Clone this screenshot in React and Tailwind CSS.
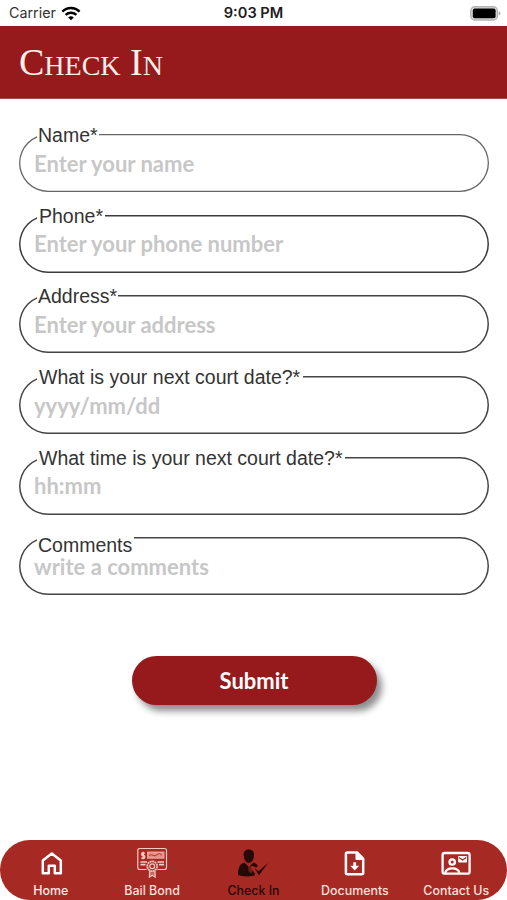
import React from "react";

const fields = [
  { label: "Name*", hint: "Enter your name", line: "shadow-[inset_0_0_0_1.3px_#666]", pad: "pl-px pr-[1px]", drop: "-top-[9px]" },
  { label: "Phone*", hint: "Enter your phone number", line: "shadow-[inset_0_0_0_1.5px_#3c3c3c]", pad: "pl-[2px] pr-[2px]", drop: "-top-[9px]" },
  { label: "Address*", hint: "Enter your address", line: "shadow-[inset_0_0_0_1.5px_#444]", pad: "pl-px pr-[1px]", drop: "-top-[9px]" },
  { label: "What is your next court date?*", hint: "yyyy/mm/dd", line: "shadow-[inset_0_0_0_1.5px_#444]", pad: "pl-[2px] pr-[3px]", drop: "-top-[9px]" },
  { label: "What time is your next court date?*", hint: "hh:mm", line: "shadow-[inset_0_0_0_1.5px_#444]", pad: "pl-[2px] pr-[3px]", drop: "-top-[9px]" },
  { label: "Comments", hint: "write a comments", line: "shadow-[inset_0_0_0_1.5px_#444]", pad: "pl-px pr-[2px]", drop: "-top-[2px]" },
];

function Wifi() {
  return (
    <svg className="h-[15px] w-[20px]" viewBox="0 0 20 15" fill="none" stroke="#000">
      <path d="M1.4 5.6C6.3.9 13.7.9 18.600 5.600" strokeWidth="2.500" />
      <path d="M4.600 8.900C7.700 6 12.300 6 15.400 8.900" strokeWidth="2.300" />
      <path d="M10 14.300 7.200 11.500Q10 9.200 12.800 11.500Z" fill="#000" stroke="none" />
    </svg>
  );
}

function Battery() {
  return (
    <svg className="h-[15px] w-[31px]" viewBox="0 0 31 15">
      <rect x=".8" y=".8" width="26.600" height="13.200" rx="4" fill="#ddd" stroke="#b4b4b4" strokeWidth="1.400" />
      <rect x="2.800" y="2.600" width="22.800" height="9.700" rx="1.800" fill="#000" />
      <path d="M28.600 5.200Q30.600 6 30.600 7.400T28.600 9.600Z" fill="#b4b4b4" />
    </svg>
  );
}

function HomeIcon() {
  return (
    <svg className="h-[32px] w-[32px]" viewBox="0 0 32 32" fill="none" stroke="#fff" strokeWidth="2.500" strokeLinejoin="round">
      <path d="M7.800 26.300V13.400L16.800 6.600 25.800 13.400V26.300H19.800V18.800H13.800V26.300Z" />
    </svg>
  );
}

function BondIcon() {
  return (
    <svg className="h-[32px] w-[32px]" viewBox="0 0 32 32" fill="none" stroke="#f6c9c3" strokeWidth="1.200">
      <path d="M10.500 22.500H3.800Q1.800 22.500 1.800 20.500V3.500Q1.800 1.500 3.800 1.500H28.500Q30.500 1.500 30.500 3.500V20.500Q30.500 22.500 28.500 22.500H21.500" />
      <path d="M8.900 6.300Q6 5 5.800 6.900T7.300 8.600 8.600 10.400 5.300 10.900M7.300 4.700V12.300" strokeWidth="1.500" />
      <rect x="11.500" y="5" width="16.500" height="6.200" fill="#e4938c" stroke="#f0b5ae" strokeWidth=".8" />
      <path d="M13 8.700Q15 6.700 17 8.300T21 7.600 26 8.100" stroke="#a72923" strokeWidth=".9" />
      <path d="M4.500 15H11M4.500 17.600H9.500M21.500 15H28M23 17.600H28" strokeWidth="1.600" />
      <path d="m13.600 24-.2 6.200 2.900-2 2.900 2L19 24" fill="#c7655f" />
      <circle cx="16.200" cy="19.200" r="4.900" strokeWidth="1.800" strokeDasharray="2 .5" />
      <circle cx="16.200" cy="19.200" r="2.400" />
    </svg>
  );
}

function CheckInIcon() {
  return (
    <svg className="h-[32px] w-[32px]" viewBox="0 0 32 32" fill="#260806">
      <path d="M11.800 2.600C15.500 2.600 17.400 5 17 8.700 16.700 12.500 14.800 15.800 11.800 15.800S7 12.500 6.700 8.700C6.300 5 8.200 2.600 11.800 2.600Z" />
      <path d="M7.500 15.500 11.800 20 16.500 15.500C19 16.500 20.300 17.300 20.800 19.200L19 20.600 15.500 18.800 13.300 20.300 18 26.700 17.500 28.500Q8 30.500 1 28C1.200 21.500 2 17.300 7.500 15.500Z" />
      <path d="m17.500 21.300 4 3 9.500-8.300-9 12.300Z" />
      <path d="m11.500 17.200 2 .1-.2 1.600 2.600 5.200-2 2.600-2.600-3Z" fill="#a72923" opacity=".6" />
    </svg>
  );
}

function DocumentIcon() {
  return (
    <svg className="h-[32px] w-[32px]" viewBox="0 0 32 32" fill="none" stroke="#fff" strokeWidth="2.500" strokeLinejoin="round">
      <path d="M8.400 5.500H18L24.200 11.700V25.800Q24.200 27.300 22.700 27.300H8.400Q6.900 27.300 6.900 25.800V7Q6.900 5.500 8.400 5.500Z" />
      <path d="M17 5.700V12.500H24Z" fill="#fff" strokeWidth="1" />
      <path d="M15.700 15.300V20" strokeWidth="2.800" />
      <path d="M11.200 18.700H20.200L15.700 23.500Z" fill="#fff" stroke="none" />
    </svg>
  );
}

function ContactIcon() {
  return (
    <svg className="h-[32px] w-[32px]" viewBox="0 0 32 32" fill="none" stroke="#fff" strokeWidth="2.300">
      <rect x="2.600" y="6" width="27" height="20.700" rx="2" />
      <circle cx="12.200" cy="15" r="2.700" />
      <path d="M5.200 26Q6.200 21.400 12.300 21.400T19.400 26" />
      <rect x="18.200" y="9" width="8.800" height="6.500" rx=".7" fill="#fff" stroke="none" />
      <path d="m19 10.400 3.600 2.500 3.600-2.500" stroke="#a72923" strokeWidth="1.200" />
    </svg>
  );
}

const tabs = [
  { name: "Home", Icon: HomeIcon, tone: "text-[#ffe9e5]" },
  { name: "Bail Bond", Icon: BondIcon, tone: "text-[#ffe0dc]" },
  { name: "Check In", Icon: CheckInIcon, tone: "text-[#260806]" },
  { name: "Documents", Icon: DocumentIcon, tone: "text-[#ffe0dc]" },
  { name: "Contact Us", Icon: ContactIcon, tone: "text-[#ffe0dc]" },
];

export default function App() {
  return (
    <div className="flex h-[900px] w-[507px] flex-col overflow-hidden bg-white">
      <div className="grid h-[26px] shrink-0 grid-cols-3 items-center px-[9px] pt-px font-['Inter',sans-serif] text-[14.300px] leading-none">
        <div className="flex items-center gap-[5px] text-[#333]">
          <span>Carrier</span>
          <Wifi />
        </div>
        <span className="text-center text-[14.600px] font-semibold text-[#1c1c1c]">9:03 PM</span>
        <div className="-mr-[3px] flex justify-end">
          <Battery />
        </div>
      </div>

      <header className="flex h-[73px] shrink-0 items-center border-b border-[#a64b4d] bg-[#96191c] pl-[19px]">
        <h1 className="whitespace-nowrap font-['Liberation_Serif',serif] text-[38px] leading-none text-[#ffeee8]">
          C<span className="text-[28px]">HECK</span> I<span className="text-[28px]">N</span>
        </h1>
      </header>

      <form className="flex grow flex-col px-[19px] pt-[35px]">
        <div className="flex flex-col gap-[22.700px]">
          {fields.map((f) => (
            <div key={f.label} className={"relative flex h-[58px] w-[470px] items-center rounded-full pl-[15px] " + f.line}>
              <label className={"absolute left-[18px] whitespace-nowrap bg-white font-['Liberation_Sans',sans-serif] text-[19.500px] leading-[20px] text-[#333] " + f.pad + " " + f.drop}>
                {f.label}
              </label>
              <span className="pt-px font-['Lato',sans-serif] text-[22px] font-bold leading-[22px] text-[#c7c7c7]">{f.hint}</span>
            </div>
          ))}
        </div>
        <button type="button" className="mt-[61px] ml-[112.500px] h-[49px] w-[245px] rounded-full bg-[#96191c] pb-px font-['Lato',sans-serif] text-[22px] font-bold text-white shadow-[5px_6px_7px_rgba(0,0,0,0.45)]">
          Submit
        </button>
      </form>

      <nav className="grid h-[60px] shrink-0 grid-cols-5 rounded-full bg-[#a72923]">
        {tabs.map(({ name, Icon, tone }) => (
          <div key={name} className="flex flex-col items-center pt-[7px]">
            <Icon />
            <span className={"mt-[5px] whitespace-nowrap font-['Inter',sans-serif] text-[12.400px] font-medium leading-[14px] " + tone}>{name}</span>
          </div>
        ))}
      </nav>
    </div>
  );
}
